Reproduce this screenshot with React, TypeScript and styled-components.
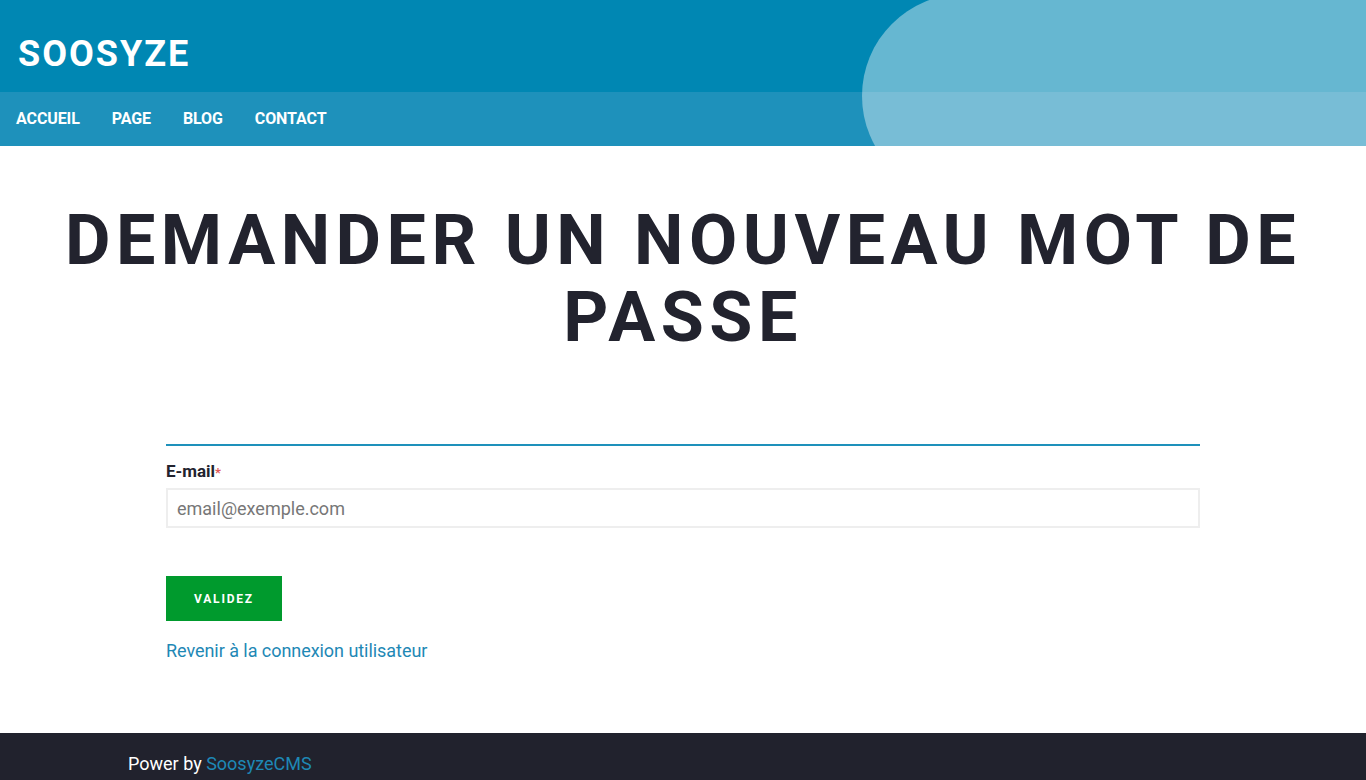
import React from "react";
import styled, { createGlobalStyle } from "styled-components";

const Global = createGlobalStyle`
  html, body { margin: 0; padding: 0; background: #fff; }
  body { font-family: Roboto, "Liberation Sans", Arial, sans-serif; color: #22232e; }
  * { box-sizing: border-box; }
`;

const Header = styled.header`
  position: relative;
  overflow: hidden;
  background: #0087b3;
`;

const BrandBar = styled.div`
  height: 92px;
  display: flex;
  align-items: center;
  padding: 16px 18px 0;
`;

const Logo = styled.a`
  color: #fff;
  font-weight: 700;
  font-size: 36px;
  letter-spacing: 2px;
  text-decoration: none;
`;

const Nav = styled.nav`
  height: 54px;
  background: #1e91bb;
  display: flex;
  align-items: center;
  padding: 0 0 2px 16px;
  gap: 32px;
`;

const NavLink = styled.a`
  color: #fff;
  font-weight: 700;
  font-size: 16px;
  letter-spacing: -0.1px;
  text-transform: uppercase;
  text-decoration: none;
`;

const Bubble = styled.div`
  position: absolute;
  left: 862px;
  top: -6px;
  width: 700px;
  height: 204px;
  border-radius: 102px;
  background: rgba(255, 255, 255, 0.4);
  pointer-events: none;
`;

const Main = styled.main`
  padding: 56px 0 71px;
`;

const Title = styled.h1`
  margin: 0 auto;
  max-width: 1300px;
  text-align: center;
  font-size: 70px;
  line-height: 77px;
  font-weight: 700;
  letter-spacing: 5.5px;
  text-transform: uppercase;
  color: #22232e;
`;

const Form = styled.form`
  width: 1034px;
  margin: 88px auto 0;
  border-top: 2px solid #1e91bb;
  padding-top: 14px;
`;

const Label = styled.label`
  display: block;
  font-weight: 700;
  font-size: 17px;
  line-height: 22px;
  color: #22232e;
`;

const Required = styled.span`
  color: #e05a5a;
  font-size: 13px;
`;

const Input = styled.input`
  display: block;
  width: 100%;
  height: 40px;
  margin-top: 4px;
  border: 2px solid #eeeeee;
  padding: 0 9px;
  font-family: inherit;
  font-size: 18px;
  color: #333;
  outline: none;
  &::placeholder { color: #777; }
`;

const Button = styled.button`
  margin-top: 48px;
  width: 116px;
  height: 45px;
  border: none;
  background: #009a2d;
  color: #fff;
  font-family: inherit;
  font-weight: 700;
  font-size: 12px;
  letter-spacing: 1.8px;
  text-transform: uppercase;
  cursor: pointer;
`;

const BackLink = styled.a`
  display: block;
  margin-top: 19px;
  color: #1e88b5;
  font-size: 18px;
  letter-spacing: -0.05px;
  line-height: 22px;
  text-decoration: none;
`;

const Footer = styled.footer`
  background: #21222d;
  padding: 19px 0 20px;
`;

const FooterInner = styled.div`
  width: 1110px;
  margin: 0 auto;
  color: #fff;
  font-size: 18px;
  line-height: 24px;
`;

const FooterLink = styled.a`
  color: #1e88b5;
  text-decoration: none;
`;

export default function App() {
  return (
    <>
      <Global />
      <Header>
        <BrandBar>
          <Logo href="#">SOOSYZE</Logo>
        </BrandBar>
        <Nav>
          <NavLink href="#">Accueil</NavLink>
          <NavLink href="#">Page</NavLink>
          <NavLink href="#">Blog</NavLink>
          <NavLink href="#">Contact</NavLink>
        </Nav>
        <Bubble />
      </Header>
      <Main>
        <Title>Demander un nouveau mot de passe</Title>
        <Form onSubmit={(e) => e.preventDefault()}>
          <Label htmlFor="email">
            E-mail<Required>*</Required>
          </Label>
          <Input id="email" type="email" placeholder="email@exemple.com" />
          <Button type="submit">Validez</Button>
          <BackLink href="#">Revenir à la connexion utilisateur</BackLink>
        </Form>
      </Main>
      <Footer>
        <FooterInner>
          Power by <FooterLink href="#">SoosyzeCMS</FooterLink>
        </FooterInner>
      </Footer>
    </>
  );
}
